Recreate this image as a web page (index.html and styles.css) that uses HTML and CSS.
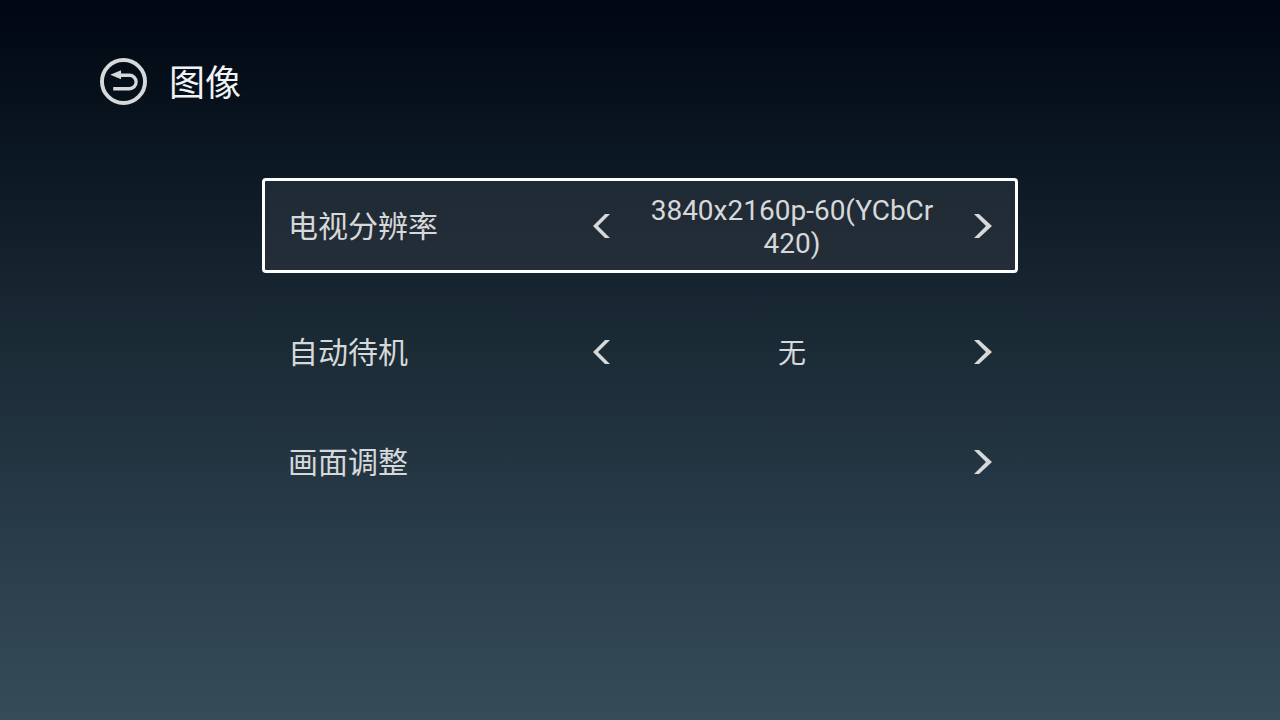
FILE: index.html
```html
<!DOCTYPE html>
<html lang="zh-CN">
<head>
    <meta charset="UTF-8">
    <meta name="viewport" content="width=device-width, initial-scale=1.0">
    <title>图像</title>
    <link rel="stylesheet" href="styles.css">
</head>
<body>
    <header class="header">
        <button type="button" class="back" aria-label="返回">
            <svg viewBox="0 0 48 48" width="47" height="47">
                <circle cx="24" cy="24" r="22" fill="none" stroke="currentColor" stroke-width="4"/>
                <path d="M19 17.6h11a6.9 6.9 0 0 1 0 13.8H13.5" fill="none" stroke="currentColor" stroke-width="3.4"/>
                <path d="M10.5 17.2L21.5 12.6V21.8Z" fill="currentColor"/>
            </svg>
        </button>
        <h1>图像</h1>
    </header>

    <main class="settings">
        <div class="row focused">
            <span class="label">电视分辨率</span>
            <div class="control">
                <button type="button" class="arrow" aria-label="上一个">
                    <svg viewBox="0 0 18 26" width="18" height="26"><path d="M13 1h5L6 13l12 12h-5L1 13Z"/></svg>
                </button>
                <span class="value">3840x2160p-60(YCbCr 420)</span>
                <button type="button" class="arrow" aria-label="下一个">
                    <svg viewBox="0 0 18 26" width="18" height="26"><path d="M5 1H0l12 12L0 25h5l13-12Z"/></svg>
                </button>
            </div>
        </div>
        <div class="row">
            <span class="label">自动待机</span>
            <div class="control">
                <button type="button" class="arrow" aria-label="上一个">
                    <svg viewBox="0 0 18 26" width="18" height="26"><path d="M13 1h5L6 13l12 12h-5L1 13Z"/></svg>
                </button>
                <span class="value">无</span>
                <button type="button" class="arrow" aria-label="下一个">
                    <svg viewBox="0 0 18 26" width="18" height="26"><path d="M5 1H0l12 12L0 25h5l13-12Z"/></svg>
                </button>
            </div>
        </div>
        <div class="row">
            <span class="label">画面调整</span>
            <button type="button" class="arrow" aria-label="进入画面调整">
                <svg viewBox="0 0 18 26" width="18" height="26"><path d="M5 1H0l12 12L0 25h5l13-12Z"/></svg>
            </button>
        </div>
    </main>
</body>
</html>
```
FILE: styles.css
```css
* { box-sizing: border-box; }
body { margin: 0; min-height: 100vh; font-family: Roboto, "Noto Sans CJK SC", sans-serif; color: #d7d8da; background: linear-gradient(#010613 0%, #06111b 14%, #0f1c28 28%, #1b2b36 48%, #243643 66%, #364c59 100%); }
button { display: block; padding: 0; border: none; background: none; color: inherit; cursor: pointer; }
svg { display: block; }

.header { display: flex; align-items: flex-start; gap: 22px; padding: 58px 100px 0; }
.header h1 { margin: 0; font-size: 36px; font-weight: 400; line-height: 52px; color: #f0f2f5; }

.settings { display: flex; flex-direction: column; gap: 48px; width: 59%; min-width: 756px; margin: 68px auto 0; }
.row { display: flex; justify-content: space-between; align-items: center; min-height: 62px; padding: 0 23px; border: 3px solid transparent; border-radius: 4px; }
.row.focused { min-height: 95px; border-color: #fff; background: linear-gradient(#1e2a35, #252e38) padding-box; }
.label { padding-top: 2px; font-size: 30px; line-height: 44px; }
.control { display: flex; justify-content: space-between; align-items: center; width: 400px; }
.value { flex: 1; padding: 2px 32px 0; font-size: 28px; line-height: 33px; text-align: center; }
.arrow svg { fill: currentColor; }
```
